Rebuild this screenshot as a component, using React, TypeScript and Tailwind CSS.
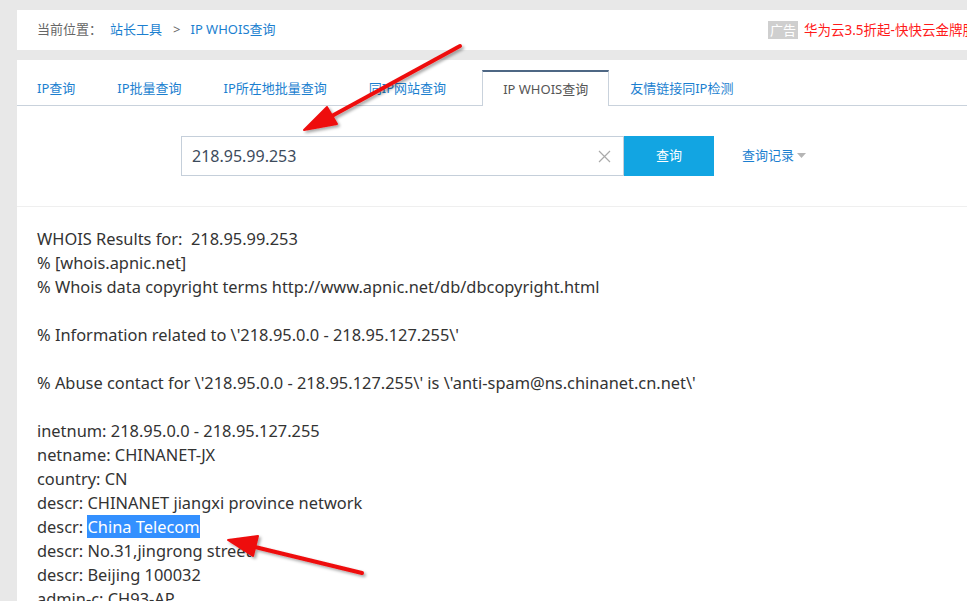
import React from "react";

const lines: (string | null)[] = [
  "WHOIS Results for:  218.95.99.253",
  "% [whois.apnic.net]",
  "% Whois data copyright terms http://www.apnic.net/db/dbcopyright.html",
  "",
  "% Information related to \\'218.95.0.0 - 218.95.127.255\\'",
  "",
  "% Abuse contact for \\'218.95.0.0 - 218.95.127.255\\' is \\'anti-spam@ns.chinanet.cn.net\\'",
  "",
  "inetnum: 218.95.0.0 - 218.95.127.255",
  "netname: CHINANET-JX",
  "country: CN",
  "descr: CHINANET jiangxi province network",
  null,
  "descr: No.31,jingrong street",
  "descr: Beijing 100032",
  "admin-c: CH93-AP",
];

const tabs = ["IP查询", "IP批量查询", "IP所在地批量查询", "同IP网站查询", "IP WHOIS查询", "友情链接同IP检测"];

export default function App() {
  const font = { fontFamily: '"Noto Sans", "Noto Sans CJK SC", sans-serif' };
  return (
    <div className="relative w-[967px] h-[601px] overflow-hidden bg-[#e8e8e8]" style={font}>
      <div className="ml-[17px] pt-[10px]">
        <div className="h-[40px] bg-white flex items-center pl-[20px] text-[13px] whitespace-nowrap overflow-hidden">
          <span className="text-[#666]">当前位置：</span>
          <span className="ml-[8px] text-[#1b7fd0]">站长工具</span>
          <span className="ml-[11px] text-[#666]">&gt;</span>
          <span className="ml-[10px] text-[#1b7fd0]">IP WHOIS查询</span>
          <div className="ml-auto w-[199px] shrink-0 flex items-center overflow-hidden">
            <span className="bg-[#cfcfcf] text-white text-[13px] leading-[18px] px-[2px] mr-[6px] shrink-0">广告</span>
            <span className="text-[#ff1a1a] text-[13.5px] shrink-0">华为云3.5折起-快快云金牌服务商</span>
          </div>
        </div>
        <div className="mt-[10px] bg-white h-[600px]">
          <div className="pt-[10px] flex border-b border-[#c9d2dc] h-[46px] text-[13px]">
            {tabs.map((t, i) =>
              i === 4 ? (
                <div key={t} className="relative -mb-px ml-[15px] px-[20px] h-[36px] pt-[2px] bg-white border-t-2 border-t-[#4e6784] border-x border-x-[#c9d2dc] flex items-center justify-center text-[#555] whitespace-nowrap">
                  {t}
                </div>
              ) : (
                <div key={t} className={"h-[36px] pt-[2px] flex items-center text-[#1b7fd0] px-[21px] whitespace-nowrap " + (i === 0 ? "pl-[20px]" : "")}>
                  {t}
                </div>
              )
            )}
          </div>
          <div className="h-[101px] border-b border-[#efefef] flex items-start pt-[30px] pl-[164px]">
            <div className="w-[443px] h-[40px] border border-[#c5cfda] flex items-center pl-[10px] pr-[12px]">
              <span className="text-[16px] text-[#3d4b5c] flex-1">218.95.99.253</span>
              <svg width="13" height="13" viewBox="0 0 13 13" className="text-[#aaa]">
                <path d="M1 1L12 12M12 1L1 12" stroke="currentColor" strokeWidth="1.2" />
              </svg>
            </div>
            <div className="w-[90px] h-[40px] bg-[#12a5e2] text-white text-[13px] flex items-center justify-center">查询</div>
            <div className="ml-[28px] h-[40px] flex items-center text-[13px] text-[#1b7fd0]">
              查询记录
              <svg width="9" height="6" viewBox="0 0 9 6" className="ml-[3px]">
                <path d="M0 0H9L4.5 5Z" fill="#b5b5b5" />
              </svg>
            </div>
          </div>
          <div className="pl-[20px] pt-[20px] text-[16.4px] leading-[24px] text-[#333] whitespace-pre">
            {lines.map((l, i) =>
              l === null ? (
                <div key={i} className="h-[24px]">
                  descr: <span className="bg-[#3390ff] text-white">China Telecom</span>
                </div>
              ) : (
                <div key={i} className="h-[24px]">{l}</div>
              )
            )}
          </div>
        </div>
      </div>
      <svg className="absolute left-0 top-0 pointer-events-none" width="967" height="601">
        <defs>
          <filter id="sh" x="-20%" y="-20%" width="140%" height="140%">
            <feDropShadow dx="2" dy="2" stdDeviation="1.5" floodColor="#000" floodOpacity="0.35" />
          </filter>
        </defs>
        <g filter="url(#sh)" fill="#ee1111" stroke="#ee1111">
          <line x1="460" y1="46" x2="330" y2="117" strokeWidth="4" strokeLinecap="round" />
          <path d="M304 130L327 107L337 124Z" strokeWidth="2" strokeLinejoin="round" />
          <line x1="362" y1="573" x2="255" y2="547" strokeWidth="4" strokeLinecap="round" />
          <path d="M228 540L258 536L253 556Z" strokeWidth="2" strokeLinejoin="round" />
        </g>
      </svg>
    </div>
  );
}
